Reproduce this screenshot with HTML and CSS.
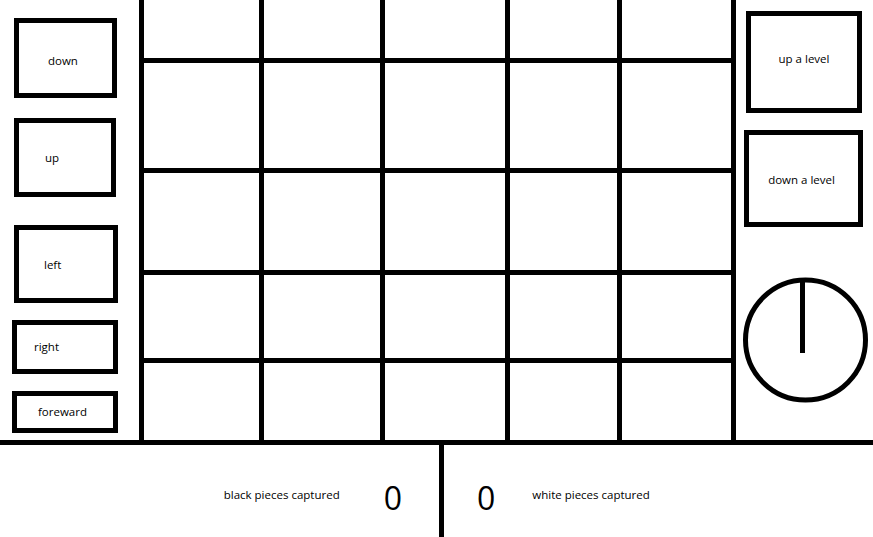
FILE: index.html
```html
<!DOCTYPE html>
<html>
	<head>
		<title>Board</title>
		<link rel="stylesheet" href="styles.css">
	</head>
	<body>
		<div class="top">
			<!-- movement buttons -->
			<div class="moves">
				<div class="btn down">down</div>
				<div class="btn up">up</div>
				<div class="btn left">left</div>
				<div class="btn right">right</div>
				<div class="btn fwd">foreward</div>
			</div>

			<div class="board">
				<div></div><div></div><div></div><div></div><div></div>
				<div></div><div></div><div></div><div></div><div></div>
				<div></div><div></div><div></div><div></div><div></div>
				<div></div><div></div><div></div><div></div><div></div>
				<div></div><div></div><div></div><div></div><div></div>
			</div>

			<div class="levels">
				<div class="btn lvlUp">up a level</div>
				<div class="btn lvlDown">down a level</div>
				<svg class="dial" width="126" height="127" viewBox="0 0 126 127">
					<circle cx="62.5" cy="63" r="60" fill="none" stroke="#000" stroke-width="5"/>
					<line x1="59.5" y1="2" x2="59.5" y2="76" stroke="#000" stroke-width="5"/>
				</svg>
			</div>
		</div>

		<div class="score">
			<div class="tally black">
				<span class="label">black pieces captured</span>
				<span class="count">0</span>
			</div>
			<div class="divider"></div>
			<div class="tally white">
				<span class="count">0</span>
				<span class="label">white pieces captured</span>
			</div>
		</div>
	</body>
</html>
```

FILE: styles.css
```css
body
{
	margin:0;
	background:#fff;
	color:#000;
	font-family:"Open Sans", "Noto Sans", sans-serif;
	width:873px;
	height:537px;
	overflow:hidden;
}

.top
{
	display:flex;
	height:440px;
	border-bottom:5px solid #000;
}

.btn
{
	box-sizing:border-box;
	border:5px solid #000;
	display:flex;
	align-items:center;
	font-size:11.5px;
	line-height:1;
}

/* left column */
.moves
{
	width:139px;
	flex:none;
	display:flex;
	flex-direction:column;
}
.down
{
	margin:18px 0 0 14px;
	width:103px;
	height:80px;
	padding-left:29px;
	padding-top:5px;
}
.up
{
	margin:20px 0 0 14px;
	width:102px;
	height:79px;
	padding-left:26px;
}
.left
{
	margin:28px 0 0 14px;
	width:104px;
	height:78px;
	padding-left:25px;
	padding-top:2px;
}
.right
{
	margin:17px 0 0 12px;
	width:106px;
	height:54px;
	padding-left:17px;
}
.fwd
{
	margin:17px 0 0 12px;
	width:106px;
	height:42px;
	padding-left:21px;
}

/* board */
.board
{
	flex:none;
	display:grid;
	grid-template-columns:115px 116px 120px 107px 109px;
	grid-template-rows:58px 105px 97px 83px 77px;
	gap:5px;
	background:#000;
	border-left:5px solid #000;
	border-right:5px solid #000;
}
.board div
{
	background:#fff;
}

/* right column */
.levels
{
	flex:1;
	display:flex;
	flex-direction:column;
	align-items:flex-start;
}
.lvlUp
{
	margin:11px 0 0 10px;
	width:116px;
	height:102px;
	justify-content:center;
	padding-bottom:6px;
}
.lvlDown
{
	margin:17px 0 0 8px;
	width:119px;
	height:97px;
	justify-content:center;
	padding-top:3px;
	padding-right:4px;
}
.dial
{
	margin:50px 0 0 7px;
	display:block;
}

/* captured pieces */
.score
{
	display:flex;
	height:92px;
}
.tally
{
	display:flex;
	align-items:center;
	padding-top:14px;
}
.black
{
	width:439px;
	justify-content:flex-end;
	padding-right:37px;
	box-sizing:border-box;
}
.white
{
	padding-left:33px;
}
.divider
{
	width:5px;
	background:#000;
}
.label
{
	font-size:11.5px;
	margin-top:-8px;
}
.count
{
	font-size:32px;
	line-height:1;
}
.black .count
{
	margin-left:44px;
}
.white .count
{
	margin-right:37px;
}
```
